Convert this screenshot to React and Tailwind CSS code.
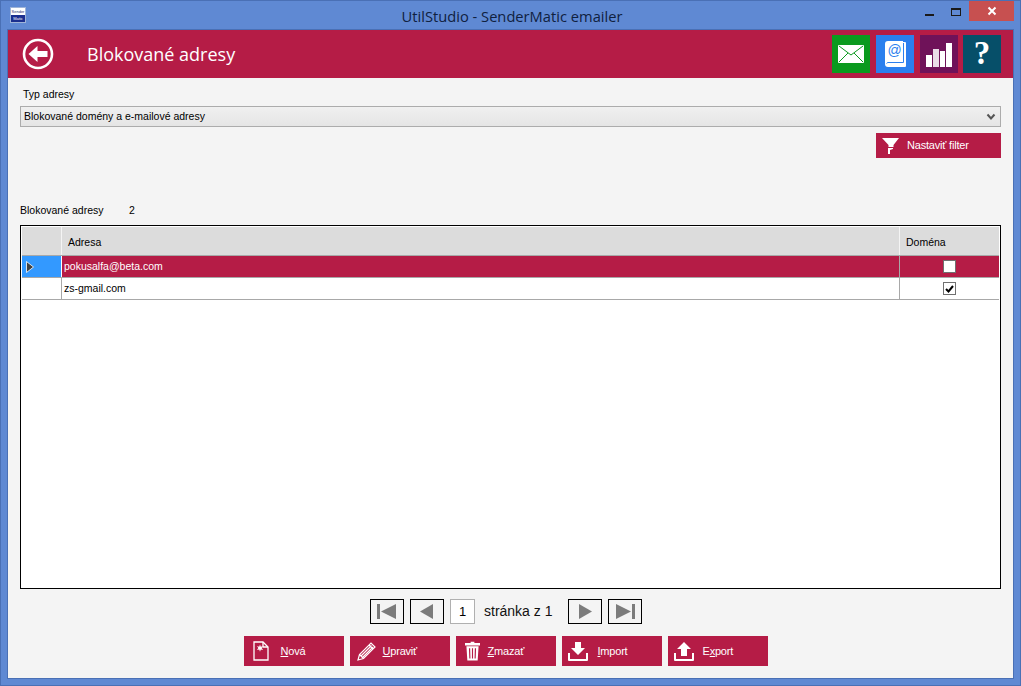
import React from 'react';

const sans = "font-['Liberation_Sans',Arial,sans-serif]";

const ActionButton = ({ icon, children, slot }) => (
  <button className="w-[100px] h-[30px] bg-[#b51c46] text-white flex items-center text-[11px] tracking-[-0.2px]">
    <span className={`${slot} flex items-center shrink-0`}>{icon}</span>
    <span>{children}</span>
  </button>
);

const PagerButton = ({ children }) => (
  <button className="w-[34px] h-[25px] border border-black flex items-center justify-center">
    <svg width="24" height="17" viewBox="0 0 24 17" fill="#7c7c7c">{children}</svg>
  </button>
);

const App = () => {
  return (
    <div className={`w-[1021px] h-[686px] bg-[#5f89d3] border border-[#4a70b5] flex flex-col overflow-hidden ${sans}`}>
      {/* title bar */}
      <div className="h-[28px] shrink-0 flex items-start">
        <div className="flex-1 pl-[9px] pt-[6px]">
          <div className="w-[16px] h-[16px] flex flex-col border border-[#9fb4d8] text-[4px] leading-[7px] text-center overflow-hidden">
            <div className="h-[8px] bg-white text-[#1b2a6b]">Sender</div>
            <div className="h-[7px] bg-[#1b2f8f] text-white">Matic</div>
          </div>
        </div>
        <div className="text-center text-[14.7px] leading-[28px] text-[#10213f] font-['Open_Sans',sans-serif] pt-[1px]">
          UtilStudio - SenderMatic emailer
        </div>
        <div className="flex-1 flex justify-end items-start mr-[6px]">
          <div className="w-[9px] h-[2px] bg-[#1a1a1a] mt-[13px] mr-[17px]" />
          <div className="w-[10px] h-[8px] border border-[#1a1a1a] border-t-2 mt-[7px] mr-[8px]" />
          <div className="w-[45px] h-[20px] bg-[#c75050] flex items-center justify-center">
            <svg width="10" height="10" viewBox="0 0 10 10" stroke="white" strokeWidth="2"><path d="M1.5 1.5l7 7M8.5 1.5l-7 7" /></svg>
          </div>
        </div>
      </div>

      <div className="ml-[6px] w-[1007px] h-[650px] border border-[#4a70b5] bg-[#f4f4f4] flex flex-col">
        {/* header */}
        <div className="h-[48px] bg-[#b51c46] flex items-center pl-[14px] pr-[12px] shrink-0">
          <svg width="32" height="32" viewBox="0 0 32 32" className="shrink-0">
            <circle cx="16" cy="16" r="14" fill="none" stroke="white" strokeWidth="2.6" />
            <path d="M6.5 16l9-8v5h10v6h-10v5z" fill="white" />
          </svg>
          <div className="ml-[33px] text-[18px] text-white flex-1 font-['Open_Sans',sans-serif]">Blokované adresy</div>
          <div className="flex -mt-[1px]">
            <div className="w-[38px] h-[38px] bg-[#0a9a1e] flex items-center justify-center">
              <svg width="26" height="18" viewBox="0 0 26 18">
                <rect width="26" height="18" rx="1" fill="white" />
                <path d="M1 1l12 9 12-9M1 17l9-9M25 17l-9-9" fill="none" stroke="#0a9a1e" strokeWidth="1" />
              </svg>
            </div>
            <div className="w-[38px] h-[38px] ml-[6px] bg-[#2b7fee] flex items-center justify-center">
              <svg width="21" height="26" viewBox="0 0 21 26">
                <path d="M3 0h15v1h2a1 1 0 0 1 1 1v23a1 1 0 0 1-1 1H3a3 3 0 0 1-3-3V3a3 3 0 0 1 3-3z" fill="white" />
                <path d="M18.5 2v19.5H3a2 2 0 0 0-1.5 1" fill="none" stroke="#2b7fee" strokeWidth="1" />
                <text x="9.5" y="14" textAnchor="middle" fontSize="14" fill="#2b7fee" fontFamily="'Liberation Sans',sans-serif">@</text>
              </svg>
            </div>
            <div className="w-[38px] h-[38px] ml-[6px] bg-[#6f1259] flex items-center justify-center pt-[1px]">
              <svg width="26" height="25" viewBox="0 0 26 25" fill="white">
                <rect x="0" y="13" width="6" height="12" />
                <rect x="7" y="7" width="6" height="18" opacity="0.85" />
                <rect x="14" y="9" width="5" height="16" />
                <rect x="20" y="1" width="6" height="24" />
              </svg>
            </div>
            <div className="w-[38px] h-[38px] ml-[5px] bg-[#064f69] flex items-center justify-center text-white text-[33px] font-bold font-['Liberation_Serif',serif] leading-none">?</div>
          </div>
        </div>

        {/* filter */}
        <div className="px-[12px] text-[10.5px] text-black shrink-0">
          <div className="pl-[3px] pt-[9px] h-[28px] leading-[14px]">Typ adresy</div>
          <div className="h-[21px] border border-[#acacac] bg-gradient-to-b from-[#f0f0f0] to-[#e5e5e5] flex items-center pl-[3px] pr-[4px] justify-between">
            <span>Blokované domény a e-mailové adresy</span>
            <svg width="10" height="8" viewBox="0 0 10 8" fill="none" stroke="#555" strokeWidth="2"><path d="M1.5 1.5L5 5.5l3.5-4" /></svg>
          </div>
          <div className="flex justify-end mt-[6px]">
            <button className="w-[125px] h-[25px] bg-[#b51c46] text-white flex items-center pl-[6px] text-[11px] tracking-[-0.2px]">
              <svg width="18" height="18" viewBox="0 0 18 18" fill="white"><path d="M0 1h17l-5.5 7v2h-5v-2zM6 11h5v1l-3 1v4H6z" /></svg>
              <span className="ml-[7px]">Nastaviť filter</span>
            </button>
          </div>
          <div className="flex mt-[43px] h-[20px] items-center">
            <span className="w-[109px]">Blokované adresy</span>
            <span>2</span>
          </div>
        </div>

        {/* grid */}
        <div className="mx-[12px] mt-[4px] h-[364px] border border-black bg-white text-[10.5px] shrink-0 px-[1px] pt-[1px]">
          <div className="flex h-[29px] bg-[#dcdcdc] border-b border-[#a8a8a8] leading-[30px]">
            <div className="w-[40px] shrink-0 border-r border-[#f4f4f4]" />
            <div className="flex-1 pl-[6px] border-r border-[#f4f4f4]">Adresa</div>
            <div className="w-[99px] shrink-0 pl-[6px]">Doména</div>
          </div>
          <div className="flex h-[22px] bg-[#b51c46] text-white border-b border-[#a8a8a8] leading-[21px]">
            <div className="w-[40px] shrink-0 bg-[#3399ff] border-r border-white flex items-center pl-[3px]">
              <svg width="10" height="14" viewBox="0 0 10 14"><path d="M1.5 1.5l7 5.5-7 5.5z" fill="#404040" stroke="white" strokeWidth="0.8" /></svg>
            </div>
            <div className="flex-1 pl-[2px] border-r border-[#a8a8a8]">pokusalfa@beta.com</div>
            <div className="w-[99px] shrink-0 flex items-center justify-center">
              <div className="w-[13px] h-[13px] bg-white border border-[#707070]" />
            </div>
          </div>
          <div className="flex h-[22px] text-black border-b border-[#a8a8a8] leading-[21px]">
            <div className="w-[40px] shrink-0 border-r border-[#a8a8a8]" />
            <div className="flex-1 pl-[2px] border-r border-[#a8a8a8]">zs-gmail.com</div>
            <div className="w-[99px] shrink-0 flex items-center justify-center">
              <div className="w-[13px] h-[13px] bg-white border border-[#707070] flex items-center justify-center">
                <svg width="9" height="8" viewBox="0 0 9 8" fill="none" stroke="black" strokeWidth="2"><path d="M1 4l2.5 2.5L8 1" /></svg>
              </div>
            </div>
          </div>
        </div>

        {/* pager */}
        <div className="h-[25px] mt-[10px] flex items-center justify-center shrink-0 pr-[9px]">
          <PagerButton><rect x="2" y="1" width="3" height="15" /><path d="M21 1v15L6 8.5z" /></PagerButton>
          <div className="w-[6px]" />
          <PagerButton><path d="M18 1v15L5 8.5z" /></PagerButton>
          <div className="w-[25px] h-[25px] ml-[6px] border border-[#b0b0b0] bg-white text-[13px] flex items-center justify-center">1</div>
          <div className="text-[14px] ml-[9px] w-[84px] text-[#111]">stránka z 1</div>
          <PagerButton><path d="M6 1v15l13-7.5z" /></PagerButton>
          <div className="w-[6px]" />
          <PagerButton><path d="M3 1v15l15-7.5z" /><rect x="19" y="1" width="3" height="15" /></PagerButton>
        </div>

        {/* actions */}
        <div className="flex justify-center gap-[6px] mt-[12px] shrink-0 pr-[10px]">
          <ActionButton slot="w-[37px] pl-[9px]" icon={
            <svg width="16" height="20" viewBox="0 0 16 20" fill="none" stroke="white" strokeWidth="1.3">
              <path d="M1 1h9l5 5v13H1z" /><path d="M10 1v5h5" />
              <path d="M7 3.5l.8 2.2 2.2-.6-1.3 2 1.3 1.9-2.2-.5-.8 2.2-.8-2.2-2.2.5 1.3-1.9-1.3-2 2.2.6z" fill="white" stroke="none" />
            </svg>}>
            <u>N</u>ová
          </ActionButton>
          <ActionButton slot="w-[33px] pl-[7px]" icon={
            <svg width="20" height="20" viewBox="0 0 20 20" fill="none" stroke="white" strokeWidth="1.2">
              <path d="M1 19l1.5-5.5L14 2l4 4L6.5 17.5z" /><path d="M2.5 13.5l4 4M12 4l4 4M4 15L14.5 4.5M5.5 16.5L16 6" />
            </svg>}>
            <u>U</u>praviť
          </ActionButton>
          <ActionButton slot="w-[32px] pl-[9px]" icon={
            <svg width="15" height="20" viewBox="0 0 16 20" fill="white">
              <path d="M6 0h4v1.5h6v2.5H0V1.5h6z" /><path d="M1.5 5h13l-1 15h-11zM4.2 7l.4 11h1.2L5.5 7zM7.4 7v11h1.2V7zM10.5 7l-.3 11h1.2l.4-11z" fillRule="evenodd" />
            </svg>}>
            <u>Z</u>mazať
          </ActionButton>
          <ActionButton slot="w-[36px] pl-[6px]" icon={
            <svg width="20" height="19" viewBox="0 0 20 19" fill="white">
              <path d="M7 0h6v6h4l-7 7-7-7h4z" /><path d="M0 11h2v6h16v-6h2v7a1 1 0 0 1-1 1H1a1 1 0 0 1-1-1z" />
            </svg>}>
            <u>I</u>mport
          </ActionButton>
          <ActionButton slot="w-[35px] pl-[6px]" icon={
            <svg width="20" height="19" viewBox="0 0 20 19" fill="white">
              <path d="M10 0l7 7h-4v7H7V7H3z" /><path d="M0 11h2v6h16v-6h2v7a1 1 0 0 1-1 1H1a1 1 0 0 1-1-1z" />
            </svg>}>
            E<u>x</u>port
          </ActionButton>
        </div>
      </div>
    </div>
  );
};

export default App;
